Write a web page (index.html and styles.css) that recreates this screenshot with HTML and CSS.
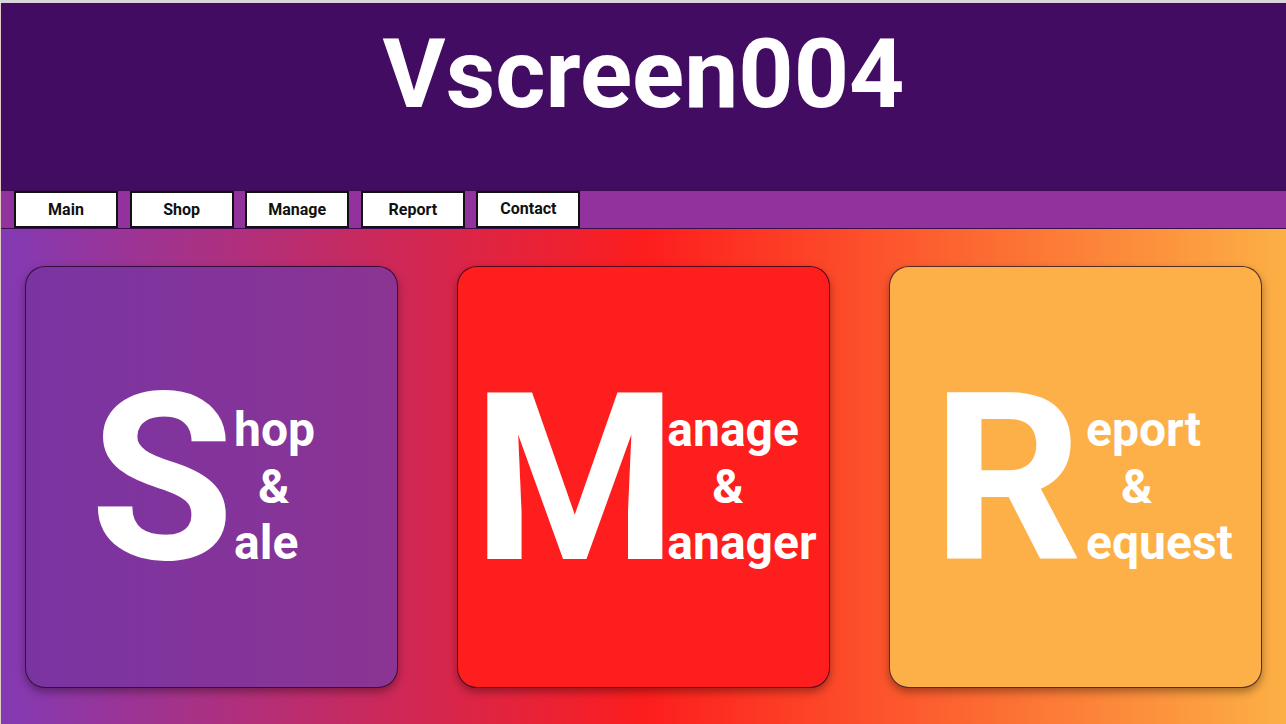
FILE: index.html
```html
<!DOCTYPE html>
<html lang="en">
<head>
<meta charset="utf-8">
<title>Vscreen004</title>
<link rel="stylesheet" href="styles.css">
</head>
<body>
<div class="page">
  <header class="header">
    <h1 class="title">Vscreen004</h1>
  </header>
  <nav class="nav">
    <a class="nav-btn" href="#">Main</a>
    <a class="nav-btn" href="#">Shop</a>
    <a class="nav-btn" href="#">Manage</a>
    <a class="nav-btn" href="#">Report</a>
    <a class="nav-btn nav-btn--contact" href="#">Contact</a>
  </nav>
  <main class="main">
    <section class="card card--shop">
      <div class="logo">
        <span class="big">S</span><span class="words"><span class="word">hop</span><span class="word amp amp--shop">&amp;</span><span class="word">ale</span></span>
      </div>
    </section>
    <section class="card card--manage">
      <div class="logo">
        <span class="big">M</span><span class="words"><span class="word">anage</span><span class="word amp amp--manage">&amp;</span><span class="word">anager</span></span>
      </div>
    </section>
    <section class="card card--report">
      <div class="logo">
        <span class="big">R</span><span class="words"><span class="word">eport</span><span class="word amp amp--report">&amp;</span><span class="word">equest</span></span>
      </div>
    </section>
  </main>
</div>
</body>
</html>
```
FILE: styles.css
```css
* { box-sizing: border-box; }
html, body {
  margin: 0;
  padding: 0;
  height: 100%;
}
body {
  font-family: Roboto, "Liberation Sans", Arial, sans-serif;
  overflow: hidden;
}
.page {
  height: 724px;
  display: flex;
  flex-direction: column;
  border-top: 3px solid #d9d6db;
  border-left: 1px solid rgba(220, 210, 230, 0.8);
  background: linear-gradient(to right, #833ab4, #fd1d1d, #fcb045);
}
.header {
  height: 187px;
  background: #420c62;
  padding-top: 15px;
  flex: none;
}
.title {
  margin: 0;
  text-align: center;
  color: #ffffff;
  font-size: 96.5px;
  font-weight: 700;
  line-height: 113px;
}
.nav {
  flex: none;
  height: 39px;
  background: #92329d;
  border-top: 1px solid #3a0c50;
  border-bottom: 1px solid #3a0c50;
  display: flex;
  align-items: stretch;
  gap: 11.6px;
  padding-left: 13px;
}
.nav-btn {
  width: 104px;
  background: #ffffff;
  border: 2px solid #111111;
  color: #111111;
  text-decoration: none;
  font-weight: 700;
  font-size: 16px;
  display: flex;
  align-items: center;
  justify-content: center;
}
.nav-btn--contact {
  padding-bottom: 2px;
}
.main {
  flex: 1;
  display: grid;
  grid-template-columns: repeat(3, 373px);
  column-gap: 59px;
  padding: 37px 24px 36px 24px;
}
.card {
  border: 1px solid rgba(30, 0, 30, 0.75);
  border-radius: 20px;
  box-shadow: 0 4px 8px rgba(0, 0, 0, 0.35);
  display: flex;
  align-items: center;
  justify-content: center;
  color: #ffffff;
  font-weight: 700;
}
.card--shop {
  background: linear-gradient(to right, #7a34a2, #8b3493);
}
.card--manage {
  background: #ff1e1e;
}
.card--report {
  background: #fdb048;
}
.logo {
  white-space: nowrap;
  padding-top: 4px;
}
.big {
  font-size: 234px;
  line-height: normal;
  vertical-align: baseline;
}
.words {
  display: inline-block;
  font-size: 48px;
  line-height: 56.5px;
  vertical-align: baseline;
}
.word {
  display: block;
}
.amp--shop { padding-left: 24px; }
.amp--manage { padding-left: 45px; }
.amp--report { padding-left: 35px; }
.card--shop .logo { margin-left: -18px; }
.card--manage .logo { margin-left: 2px; }
.card--manage .words { margin-left: -10px; }
.card--report .logo { margin-left: 14px; }
.card--report .words { margin-left: 4px; }
```
